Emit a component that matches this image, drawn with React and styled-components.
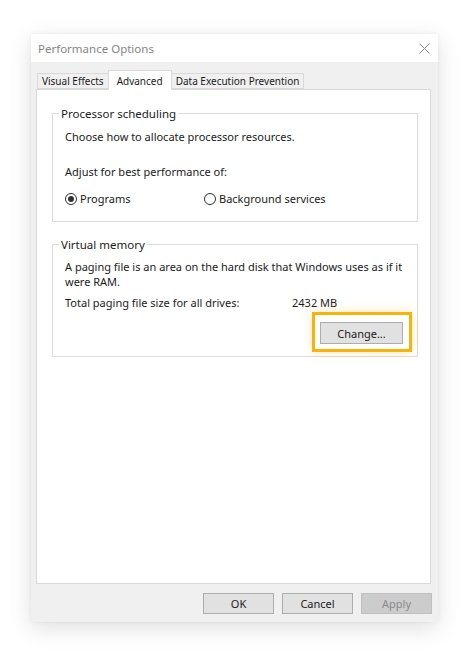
import React from "react";
import styled, { createGlobalStyle } from "styled-components";

const GlobalStyle = createGlobalStyle`
  html, body {
    margin: 0;
    padding: 0;
    background: #ffffff;
  }
  body {
    font-family: "Noto Sans", "Open Sans", sans-serif;
    font-size: 11px;
    color: #1b1b1b;
  }
`;

const Page = styled.div`
  width: 470px;
  height: 656px;
  padding: 34px 0 0 31px;
  box-sizing: border-box;
`;

const Window = styled.div`
  width: 407px;
  height: 588px;
  display: flex;
  flex-direction: column;
  background: #f0f0f0;
  box-shadow: 0 6px 22px rgba(0, 0, 0, 0.13), 0 0 4px rgba(0, 0, 0, 0.05);
`;

const TitleBar = styled.div`
  height: 29px;
  background: #ffffff;
  display: flex;
  align-items: center;
  justify-content: space-between;
  padding: 0 8px 0 7px;
  color: #858585;
  font-size: 11.5px;
`;

const CloseIcon = () => (
  <svg width="11" height="11" viewBox="0 0 11 11">
    <path d="M0.5 0.5 L10.5 10.5 M10.5 0.5 L0.5 10.5" stroke="#8a8a8a" strokeWidth="1" fill="none" />
  </svg>
);

const Body = styled.div`
  flex: 1;
  display: flex;
  flex-direction: column;
  padding: 8px 7px 8px 5px;
`;

const TabStrip = styled.div`
  display: flex;
  align-items: flex-end;
  height: 19px;
  padding-left: 1px;
  position: relative;
  z-index: 1;
`;

const Tab = styled.div`
  height: ${(p) => (p.$active ? "20px" : "16px")};
  box-sizing: border-box;
  padding: 0 ${(p) => (p.$active ? "8px" : "4px")};
  margin: ${(p) => (p.$active ? "0 -1px -1px" : "0")};
  display: flex;
  align-items: center;
  background: ${(p) => (p.$active ? "#ffffff" : "#f0f0f0")};
  border: 1px solid #d9d9d9;
  border-bottom: ${(p) => (p.$active ? "none" : "1px solid #d9d9d9")};
  font-size: 10px;
  color: #1b1b1b;
  position: relative;
  z-index: ${(p) => (p.$active ? 2 : 1)};
`;

const Panel = styled.div`
  height: 495px;
  box-sizing: border-box;
  background: #ffffff;
  border: 1px solid #d9d9d9;
  padding: 16px 12px 0 15px;
  display: flex;
  flex-direction: column;
  gap: 15px;
`;

const GroupBox = styled.fieldset`
  margin: 0;
  min-width: 0;
  border: 1px solid #dcdcdc;
  padding: ${(p) => p.$pad};
  display: flex;
  flex-direction: column;
`;

const Legend = styled.legend`
  margin-left: -6px;
  padding: 0 2px;
  line-height: 15px;
  font-size: 11.5px;
  color: #1b1b1b;
`;

const Line = styled.div`
  line-height: 15px;
  margin-top: ${(p) => p.$top || 0}px;
`;

const RadioRow = styled.div`
  display: grid;
  grid-template-columns: 139px auto;
  margin-top: 12px;
`;

const RadioItem = styled.label`
  display: flex;
  align-items: center;
  gap: 3px;
  line-height: 15px;
`;

const RadioCircle = styled.span`
  width: 12px;
  height: 12px;
  box-sizing: border-box;
  border: 1px solid #333333;
  border-radius: 50%;
  display: flex;
  align-items: center;
  justify-content: center;
  &::after {
    content: "";
    width: 6px;
    height: 6px;
    border-radius: 50%;
    background: ${(p) => (p.$checked ? "#333333" : "transparent")};
  }
`;

const SizeRow = styled.div`
  display: grid;
  grid-template-columns: 227px auto;
  line-height: 15px;
  margin-top: 6px;
`;

const HighlightRow = styled.div`
  display: flex;
  justify-content: flex-end;
  margin-top: 2px;
  margin-right: -7px;
`;

const Highlight = styled.div`
  border: 3px solid #f6b40b;
  padding: 7px 6px 5px 5px;
  box-shadow: 0 0 10px rgba(250, 190, 60, 0.35);
`;

const Button = styled.button`
  width: ${(p) => p.$w || 71}px;
  height: ${(p) => p.$h || 21}px;
  box-sizing: border-box;
  background: ${(p) => (p.disabled ? "#cccccc" : "#e1e1e1")};
  border: 1px solid ${(p) => (p.disabled ? "#bfbfbf" : "#adadad")};
  color: ${(p) => (p.disabled ? "#8a8a8a" : "#1b1b1b")};
  font-family: "Noto Sans", "Open Sans", sans-serif;
  font-size: 11px;
  padding: 0;
  display: flex;
  align-items: center;
  justify-content: center;
`;

const Footer = styled.div`
  display: flex;
  justify-content: flex-end;
  gap: 8px;
  margin-top: 9px;
  margin-right: -1px;
`;

export default function App() {
  return (
    <>
      <GlobalStyle />
      <Page>
        <Window>
          <TitleBar>
            <span>Performance Options</span>
            <CloseIcon />
          </TitleBar>
          <Body>
            <TabStrip>
              <Tab>Visual Effects</Tab>
              <Tab $active>Advanced</Tab>
              <Tab>Data Execution Prevention</Tab>
            </TabStrip>
            <Panel>
              <GroupBox $pad="8px 12px 15px 12px">
                <Legend>Processor scheduling</Legend>
                <Line>Choose how to allocate processor resources.</Line>
                <Line $top={20}>Adjust for best performance of:</Line>
                <RadioRow>
                  <RadioItem>
                    <RadioCircle $checked />
                    Programs
                  </RadioItem>
                  <RadioItem>
                    <RadioCircle />
                    Background services
                  </RadioItem>
                </RadioRow>
              </GroupBox>
              <GroupBox $pad="7px 12px 4px 12px">
                <Legend>Virtual memory</Legend>
                <Line>
                  A paging file is an area on the hard disk that Windows uses as if it
                  <br />
                  were RAM.
                </Line>
                <SizeRow>
                  <span>Total paging file size for all drives:</span>
                  <span>2432 MB</span>
                </SizeRow>
                <HighlightRow>
                  <Highlight>
                    <Button $w={83} $h={22}>Change...</Button>
                  </Highlight>
                </HighlightRow>
              </GroupBox>
            </Panel>
            <Footer>
              <Button>OK</Button>
              <Button>Cancel</Button>
              <Button disabled>Apply</Button>
            </Footer>
          </Body>
        </Window>
      </Page>
    </>
  );
}
